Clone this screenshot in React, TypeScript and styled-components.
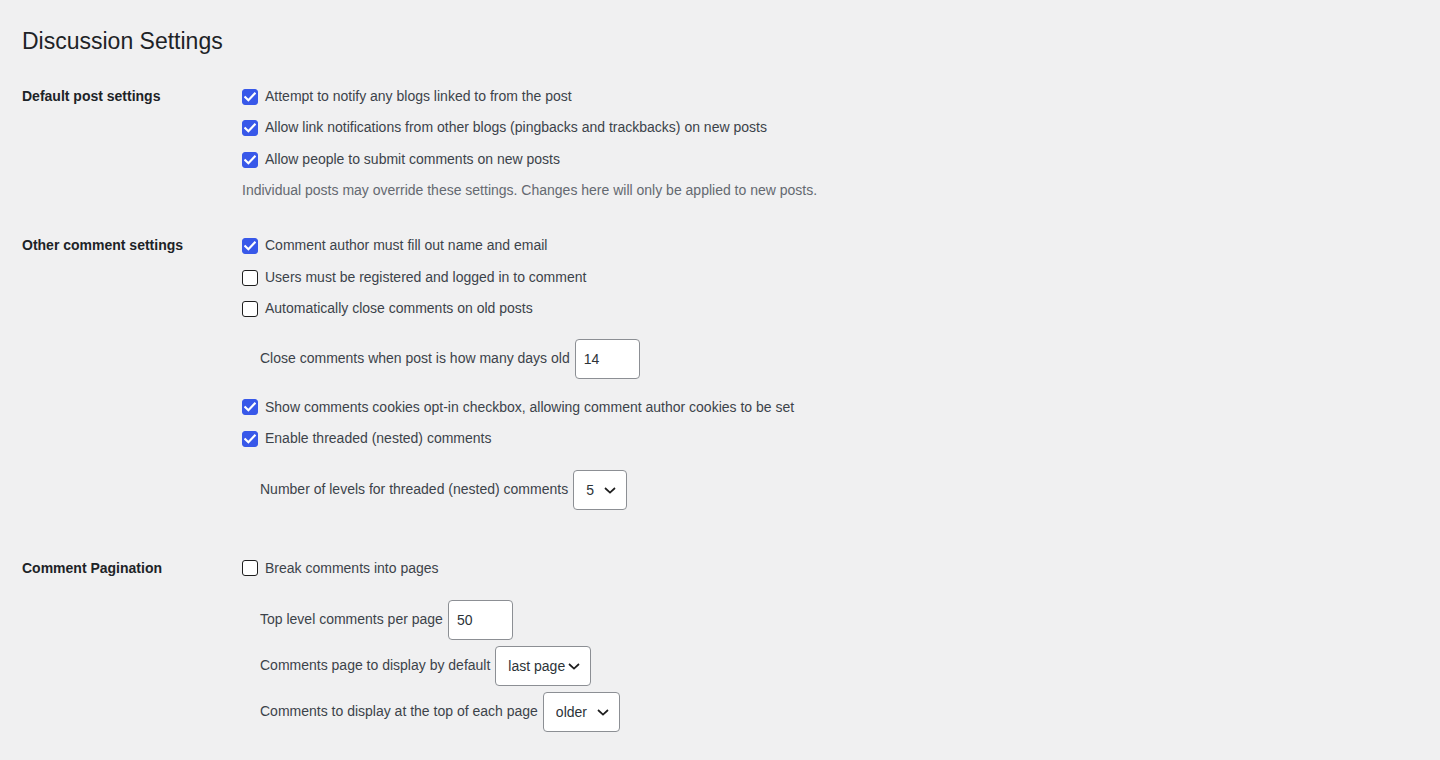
import React from "react";
import styled, { createGlobalStyle } from "styled-components";

const GlobalStyle = createGlobalStyle`
  html, body {
    margin: 0;
    padding: 0;
    background: #f0f0f1;
  }
  body {
    font-family: "Liberation Sans", Arial, sans-serif;
    font-size: 14px;
    color: #3c434a;
  }
`;

const Wrap = styled.div`
  padding: 0 20px 40px 22px;
`;

const Title = styled.h1`
  margin: 0;
  padding: 27px 0 4px;
  font-size: 23px;
  font-weight: 400;
  line-height: 1.3;
  color: #1d2327;
`;

const FormTable = styled.div`
  margin-top: 6px;
  display: flex;
  flex-direction: column;
`;

const Section = styled.div`
  display: grid;
  grid-template-columns: 210px 1fr;
`;

const Th = styled.div`
  padding: 20px 10px 20px 0;
  font-size: 14px;
  font-weight: 700;
  line-height: 1.3;
  color: #1d2327;
`;

const Td = styled.div`
  padding: 15px 10px;
  display: flex;
  flex-direction: column;
  align-items: flex-start;
`;

const CheckRow = styled.label`
  display: flex;
  align-items: center;
  gap: 7px;
  margin: 4.9px 0 7px;
  line-height: 19.6px;
  font-size: 14px;
  color: #3c434a;
  cursor: pointer;
`;

const Box = styled.span<{ $checked: boolean }>`
  box-sizing: border-box;
  width: 16px;
  height: 16px;
  border-radius: 3px;
  flex: none;
  display: inline-flex;
  align-items: center;
  justify-content: center;
  background: ${(p) => (p.$checked ? "#3858e9" : "#ffffff")};
  border: 1px solid ${(p) => (p.$checked ? "#3858e9" : "#1e1e1e")};
`;

const Description = styled.p`
  margin: 4px 0 0;
  font-size: 14px;
  line-height: 1.5;
  color: #646970;
`;

const InlineRow = styled.label<{ $mt: number; $mb: number }>`
  display: flex;
  align-items: center;
  gap: 5px;
  margin: ${(p) => p.$mt}px 0 ${(p) => p.$mb}px 18px;
  font-size: 14px;
  line-height: 19.6px;
  color: #3c434a;
`;

const TextInput = styled.input`
  box-sizing: border-box;
  width: 65px;
  height: 40px;
  padding: 0 8px;
  border: 1px solid #8c8f94;
  border-radius: 4px;
  background: #fff;
  font-family: inherit;
  font-size: 14px;
  color: #2c3338;
  outline: none;
`;

const SelectWrap = styled.span`
  position: relative;
  display: inline-flex;
`;

const Select = styled.select<{ $w: number }>`
  box-sizing: border-box;
  width: ${(p) => p.$w}px;
  height: 40px;
  padding: 0 24px 0 12px;
  border: 1px solid #8c8f94;
  border-radius: 4px;
  background: #fff;
  font-family: inherit;
  font-size: 14px;
  color: #2c3338;
  appearance: none;
  -webkit-appearance: none;
  outline: none;
`;

const Chevron = styled.svg`
  position: absolute;
  right: 11px;
  top: 50%;
  margin-top: -3px;
  width: 12px;
  height: 7px;
  pointer-events: none;
`;

const Check = () => (
  <svg width="12" height="10" viewBox="0 0 12 10" aria-hidden="true">
    <path
      d="M1.3 5.2 L4.4 8.2 L10.7 1.6"
      fill="none"
      stroke="#fff"
      strokeWidth="2.2"
      strokeLinecap="square"
    />
  </svg>
);

const Checkbox = ({ checked, label }: { checked: boolean; label: string }) => (
  <CheckRow>
    <Box $checked={checked}>{checked && <Check />}</Box>
    <span>{label}</span>
  </CheckRow>
);

const Dropdown = ({ w, value, options }: { w: number; value: string; options: string[] }) => (
  <SelectWrap>
    <Select $w={w} defaultValue={value}>
      {options.map((o) => (
        <option key={o} value={o}>
          {o}
        </option>
      ))}
    </Select>
    <Chevron viewBox="0 0 12 7" aria-hidden="true">
      <path d="M1 1 L6 5.6 L11 1" fill="none" stroke="#1e1e1e" strokeWidth="1.7" />
    </Chevron>
  </SelectWrap>
);

export default function App() {
  return (
    <>
      <GlobalStyle />
      <Wrap>
        <Title>Discussion Settings</Title>
        <FormTable>
          <Section>
            <Th>Default post settings</Th>
            <Td>
              <Checkbox checked label="Attempt to notify any blogs linked to from the post" />
              <Checkbox
                checked
                label="Allow link notifications from other blogs (pingbacks and trackbacks) on new posts"
              />
              <Checkbox checked label="Allow people to submit comments on new posts" />
              <Description>
                Individual posts may override these settings. Changes here will only be applied to new posts.
              </Description>
            </Td>
          </Section>
          <Section>
            <Th>Other comment settings</Th>
            <Td>
              <Checkbox checked label="Comment author must fill out name and email" />
              <Checkbox checked={false} label="Users must be registered and logged in to comment" />
              <Checkbox checked={false} label="Automatically close comments on old posts" />
              <InlineRow $mt={13} $mb={14}>
                <span>Close comments when post is how many days old</span>
                <TextInput defaultValue="14" />
              </InlineRow>
              <Checkbox
                checked
                label="Show comments cookies opt-in checkbox, allowing comment author cookies to be set"
              />
              <Checkbox checked label="Enable threaded (nested) comments" />
              <InlineRow $mt={14} $mb={14}>
                <span>Number of levels for threaded (nested) comments</span>
                <Dropdown w={54} value="5" options={["2", "3", "4", "5", "6", "7", "8", "9", "10"]} />
              </InlineRow>
            </Td>
          </Section>
          <Section>
            <Th>Comment Pagination</Th>
            <Td>
              <Checkbox checked={false} label="Break comments into pages" />
              <InlineRow $mt={15} $mb={0}>
                <span>Top level comments per page</span>
                <TextInput defaultValue="50" />
              </InlineRow>
              <InlineRow $mt={6} $mb={0}>
                <span>Comments page to display by default</span>
                <Dropdown w={96} value="last page" options={["last page", "first page"]} />
              </InlineRow>
              <InlineRow $mt={6} $mb={0}>
                <span>Comments to display at the top of each page</span>
                <Dropdown w={77} value="older" options={["older", "newer"]} />
              </InlineRow>
            </Td>
          </Section>
        </FormTable>
      </Wrap>
    </>
  );
}
